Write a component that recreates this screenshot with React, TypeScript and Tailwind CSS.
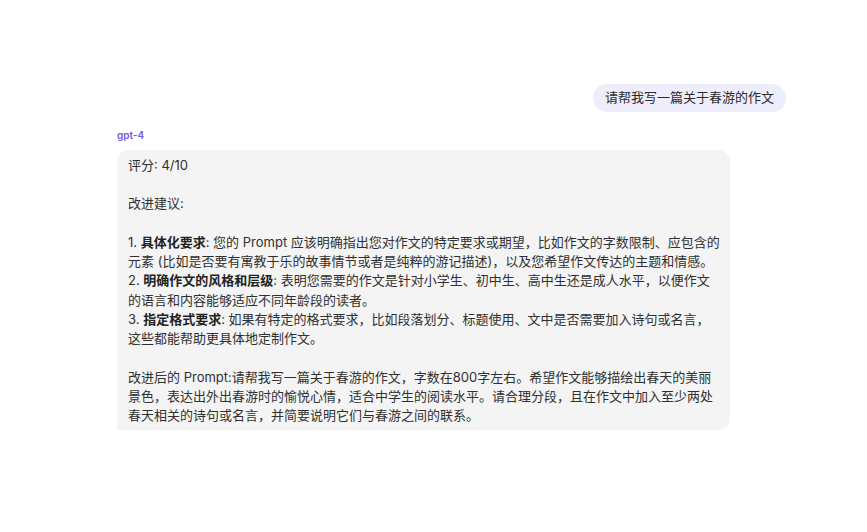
import React from 'react'

const font = { fontFamily: 'Inter, "Noto Sans CJK SC", sans-serif' }

const Blank = () => <div className="h-[19.3px]" />

export default function App() {
  return (
    <div className="min-h-screen bg-white text-[13px] leading-[19.3px] text-[#303030]" style={font}>
      <div className="pt-[84px] pl-[117px] w-[786px]">
        <div className="flex justify-end">
          <div className="rounded-[14px] bg-[#ededfb] px-3 py-[4px] leading-[19.5px] text-[#2b2b2b]">
            请帮我写一篇关于春游的作文
          </div>
        </div>

        <div className="mt-[16px] text-[10px] leading-[14px] font-semibold text-[#6d5ce0]">gpt-4</div>

        <div className="mt-[8px] w-[613px] rounded-[12px] rounded-bl-none bg-[#f4f4f4] px-[11px] pt-[6px] pb-[4px]">
          <div>评分: 4/10</div>
          <Blank />
          <div>改进建议:</div>
          <Blank />
          <div className="whitespace-nowrap">
            1. <b className="font-semibold text-[#222]">具体化要求</b>: 您的 Prompt 应该明确指出您对作文的特定要求或期望，比如作文的字数限制、应包含的
            <br />
            元素 (比如是否要有寓教于乐的故事情节或者是纯粹的游记描述)，以及您希望作文传达的主题和情感。
            <br />
            2. <b className="font-semibold text-[#222]">明确作文的风格和层级</b>: 表明您需要的作文是针对小学生、初中生、高中生还是成人水平，以便作文
            <br />
            的语言和内容能够适应不同年龄段的读者。
            <br />
            3. <b className="font-semibold text-[#222]">指定格式要求</b>: 如果有特定的格式要求，比如段落划分、标题使用、文中是否需要加入诗句或名言，
            <br />
            这些都能帮助更具体地定制作文。
          </div>
          <Blank />
          <div className="whitespace-nowrap">
            改进后的 Prompt:请帮我写一篇关于春游的作文，字数在800字左右。希望作文能够描绘出春天的美丽
            <br />
            景色，表达出外出春游时的愉悦心情，适合中学生的阅读水平。请合理分段，且在作文中加入至少两处
            <br />
            春天相关的诗句或名言，并简要说明它们与春游之间的联系。
          </div>
        </div>
      </div>
    </div>
  )
}
